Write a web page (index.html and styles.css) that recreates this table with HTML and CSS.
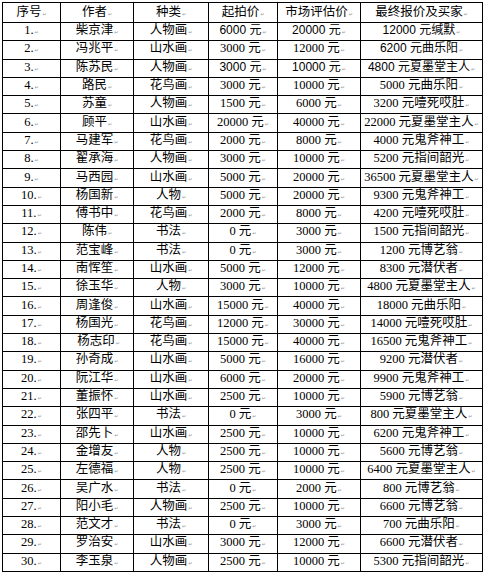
FILE: index.html
```html
<!DOCTYPE html>
<html lang="zh">
<head>
<meta charset="utf-8">
<title>拍卖结果</title>
<link rel="stylesheet" href="styles.css">
</head>
<body>
<table class="sheet">
<colgroup>
<col class="c1"><col class="c2"><col class="c3"><col class="c4"><col class="c5"><col class="c6">
</colgroup>
<thead>
<tr class="head"><th>序号</th><th>作者</th><th>种类</th><th>起拍价</th><th>市场评估价</th><th>最终报价及买家</th></tr>
</thead>
<tbody>
<tr><td>1.</td><td>柴京津</td><td>人物画</td><td class="s">6000 元</td><td class="s">20000 元</td><td class="s">12000 元缄默</td></tr>
<tr><td>2.</td><td>冯兆平</td><td>山水画</td><td>3000 元</td><td>12000 元</td><td class="s">6200 元曲乐阳</td></tr>
<tr><td>3.</td><td>陈苏民</td><td>人物画</td><td class="s">3000 元</td><td class="s">10000 元</td><td class="s">4800 元夏墨堂主人</td></tr>
<tr><td>4.</td><td>路民</td><td>花鸟画</td><td>3000 元</td><td>10000 元</td><td>5000 元曲乐阳</td></tr>
<tr><td>5.</td><td>苏童</td><td>人物画</td><td>1500 元</td><td>6000 元</td><td>3200 元噎死哎肚</td></tr>
<tr><td>6.</td><td>顾平</td><td>山水画</td><td>20000 元</td><td>40000 元</td><td>22000 元夏墨堂主人</td></tr>
<tr><td>7.</td><td>马建军</td><td>花鸟画</td><td>2000 元</td><td>8000 元</td><td>4000 元鬼斧神工</td></tr>
<tr><td>8.</td><td>翟承海</td><td>人物画</td><td>3000 元</td><td>10000 元</td><td>5200 元指间韶光</td></tr>
<tr><td>9.</td><td>马西园</td><td>山水画</td><td>5000 元</td><td>20000 元</td><td>36500 元夏墨堂主人</td></tr>
<tr><td>10.</td><td>杨国新</td><td>人物</td><td>5000 元</td><td>20000 元</td><td>9300 元鬼斧神工</td></tr>
<tr><td>11.</td><td>傅书中</td><td>花鸟画</td><td>2000 元</td><td>8000 元</td><td>4200 元噎死哎肚</td></tr>
<tr><td>12.</td><td>陈伟</td><td>书法</td><td>0 元</td><td>3000 元</td><td>1500 元指间韶光</td></tr>
<tr><td>13.</td><td>范宝峰</td><td>书法</td><td>0 元</td><td>3000 元</td><td>1200 元博艺翁</td></tr>
<tr><td>14.</td><td>南恽笙</td><td>山水画</td><td>5000 元</td><td>12000 元</td><td>8300 元潜伏者</td></tr>
<tr><td>15.</td><td>徐玉华</td><td>人物</td><td>3000 元</td><td>10000 元</td><td>4800 元夏墨堂主人</td></tr>
<tr><td>16.</td><td>周逢俊</td><td>山水画</td><td>15000 元</td><td>40000 元</td><td>18000 元曲乐阳</td></tr>
<tr><td>17.</td><td>杨国光</td><td>花鸟画</td><td>12000 元</td><td>30000 元</td><td>14000 元噎死哎肚</td></tr>
<tr><td>18.</td><td>&nbsp;杨志印</td><td>花鸟画</td><td>15000 元</td><td>40000 元</td><td>16500 元鬼斧神工</td></tr>
<tr><td>19.</td><td>孙奇成</td><td>山水画</td><td>5000 元</td><td>16000 元</td><td>9200 元潜伏者</td></tr>
<tr><td>20.</td><td>阮江华</td><td>山水画</td><td>6000 元</td><td>20000 元</td><td>9900 元鬼斧神工</td></tr>
<tr><td>21.</td><td>董振怀</td><td>山水画</td><td>2500 元</td><td>10000 元</td><td>5900 元博艺翁</td></tr>
<tr><td>22.</td><td>张四平</td><td>书法</td><td>0 元</td><td>3000 元</td><td>800 元夏墨堂主人</td></tr>
<tr><td>23.</td><td>邵先卜</td><td>山水画</td><td>2500 元</td><td>10000 元</td><td>6200 元鬼斧神工</td></tr>
<tr><td>24.</td><td>金增友</td><td>人物</td><td>2500 元</td><td>10000 元</td><td>5600 元博艺翁</td></tr>
<tr><td>25.</td><td>左德福</td><td>人物</td><td>2500 元</td><td>10000 元</td><td>6400 元夏墨堂主人</td></tr>
<tr><td>26.</td><td>吴广水</td><td>书法</td><td>0 元</td><td>2000 元</td><td>800 元博艺翁</td></tr>
<tr><td>27.</td><td>阳小毛</td><td>人物画</td><td>2500 元</td><td>10000 元</td><td>6600 元博艺翁</td></tr>
<tr><td>28.</td><td>范文才</td><td>书法</td><td>0 元</td><td>3000 元</td><td>700 元曲乐阳</td></tr>
<tr><td>29.</td><td>罗治安</td><td>山水画</td><td>3000 元</td><td>12000 元</td><td>6600 元潜伏者</td></tr>
<tr><td>30.</td><td>李玉泉</td><td>人物画</td><td>2500 元</td><td>10000 元</td><td>5300 元指间韶光</td></tr>
</tbody>
</table>
</body>
</html>
```
FILE: styles.css
```css
html, body {
  margin: 0;
  padding: 0;
  background: #fff;
}
body {
  padding: 2px 0 0 2px;
}
.sheet {
  border-collapse: collapse;
  table-layout: fixed;
  width: 480px;
  font-family: "Liberation Serif", "Noto Sans CJK SC", serif;
  font-size: 12.5px;
  color: #000;
}
.c1 { width: 58px; }
.c2 { width: 73px; }
.c3 { width: 75px; }
.c4 { width: 69px; }
.c5 { width: 83px; }
.c6 { width: 122px; }
.sheet th,
.sheet td {
  border: 1px solid #000;
  padding: 0;
  text-align: center;
  vertical-align: middle;
  white-space: nowrap;
  line-height: 15px;
  font-weight: normal;
  overflow: hidden;
}
.sheet th {
  font-family: "Noto Sans CJK SC", sans-serif;
}
.head { height: 20px; }
.sheet tbody tr { height: 18.3px; }
.sheet td.s {
  font-family: "Liberation Sans", "Noto Sans CJK SC", sans-serif;
  font-size: 12px;
}
.sheet th::after,
.sheet td::after {
  content: "\21B5";
  font-family: "DejaVu Sans", sans-serif;
  font-size: 5px;
  color: #999;
  margin-left: 1px;
  vertical-align: baseline;
}
```
